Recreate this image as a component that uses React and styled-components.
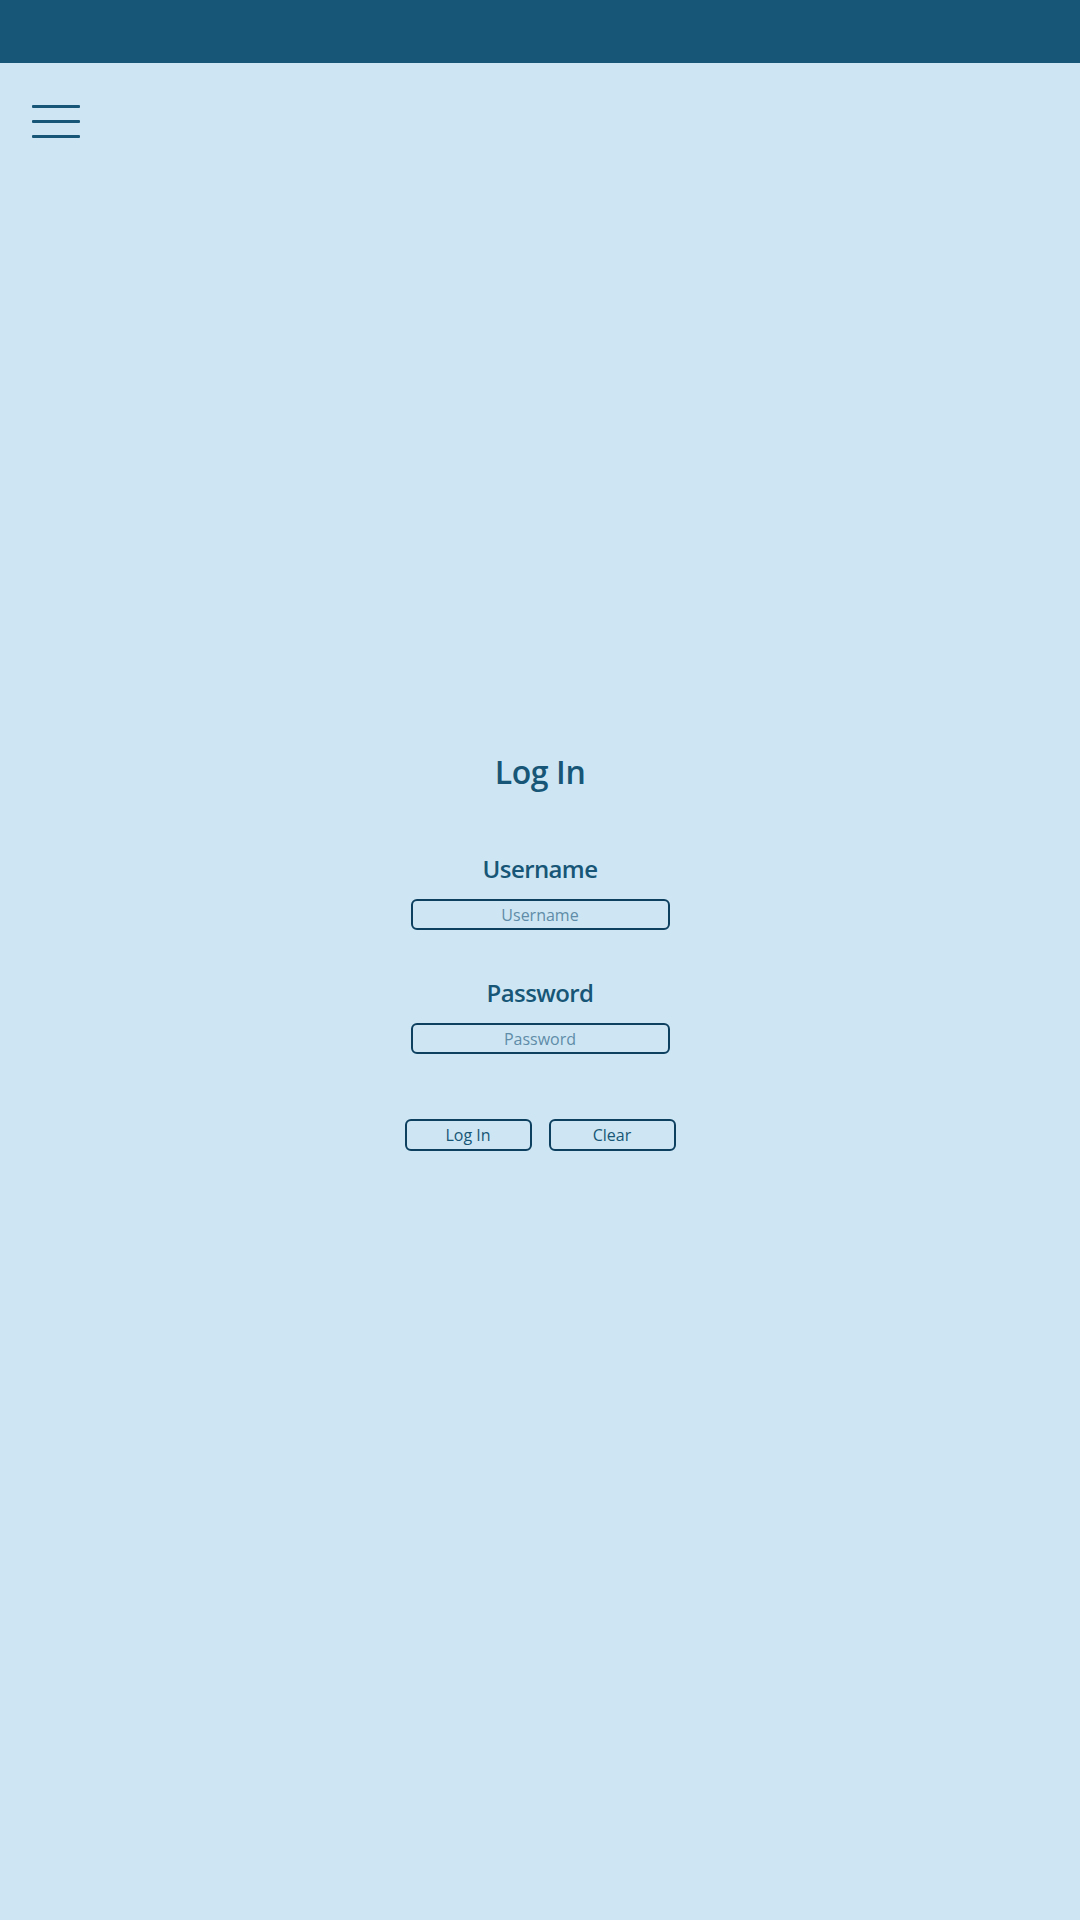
import React from "react"
import styled, { createGlobalStyle } from "styled-components"

const GlobalStyle = createGlobalStyle`
  html, body {
    margin: 0;
    padding: 0;
    background: #cee6f3;
    font-family: "Open Sans", "Noto Sans", sans-serif;
  }
  #root {
    min-height: 1920px;
    background: #cee6f3;
  }
`

const TopBar = styled.header`
  height: 63px;
  background: #175676;
`

const MenuButton = styled.button`
  display: flex;
  flex-direction: column;
  gap: 12px;
  width: 48px;
  margin: 42px 0 0 32px;
  padding: 0;
  border: none;
  background: none;
  cursor: pointer;

  span {
    display: block;
    height: 3px;
    background: #175676;
    border-radius: 1px;
  }
`

const Main = styled.main`
  display: flex;
  flex-direction: column;
  align-items: center;
  padding-top: 614px;
`

const Title = styled.h1`
  margin: 0 0 62px;
  font-size: 32px;
  line-height: 40px;
  font-weight: 600;
  letter-spacing: -0.4px;
  color: #175676;
`

const Field = styled.label`
  display: flex;
  flex-direction: column;
  align-items: center;
  gap: 15px;
  margin-bottom: ${p => p.$last ? "65px" : "48px"};
`

const FieldLabel = styled.span`
  font-size: 24px;
  line-height: 30px;
  font-weight: 600;
  letter-spacing: -0.6px;
  color: #175676;
`

const Input = styled.input`
  box-sizing: border-box;
  width: 259px;
  height: 31px;
  border: 2px solid #0d3f5f;
  border-radius: 6px;
  background: transparent;
  text-align: center;
  font-family: inherit;
  font-size: 16px;
  color: #175676;
  outline: none;

  &::placeholder {
    color: #5f8ca8;
  }
`

const ButtonRow = styled.div`
  display: flex;
  gap: 17px;
`

const Button = styled.button`
  box-sizing: border-box;
  width: 127px;
  height: 32px;
  border: 2px solid #0d3f5f;
  border-radius: 6px;
  background: transparent;
  font-family: inherit;
  font-size: 16px;
  color: #175676;
  cursor: pointer;
`

export default function App() {
  return (
    <>
      <GlobalStyle />
      <TopBar />
      <MenuButton aria-label="Menu">
        <span />
        <span />
        <span />
      </MenuButton>
      <Main>
        <Title>Log In</Title>
        <Field>
          <FieldLabel>Username</FieldLabel>
          <Input type="text" placeholder="Username" />
        </Field>
        <Field $last>
          <FieldLabel>Password</FieldLabel>
          <Input type="password" placeholder="Password" />
        </Field>
        <ButtonRow>
          <Button type="button">Log In</Button>
          <Button type="button">Clear</Button>
        </ButtonRow>
      </Main>
    </>
  )
}
